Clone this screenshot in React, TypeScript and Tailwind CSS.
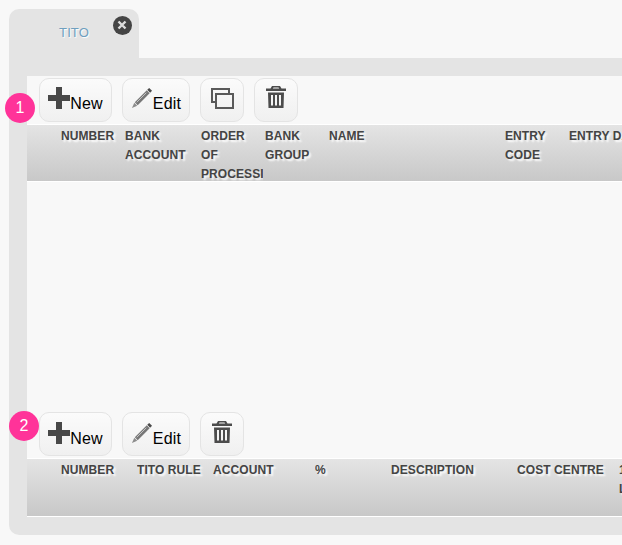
import React from 'react';

const firstColumns = [
  { label: 'NUMBER', width: 'w-[64px]' },
  { label: 'BANK ACCOUNT', width: 'w-[76px]' },
  { label: 'ORDER OF PROCESSING', width: 'w-[64px]' },
  { label: 'BANK GROUP', width: 'w-[64px]' },
  { label: 'NAME', width: 'w-[176px]' },
  { label: 'ENTRY CODE', width: 'w-[64px]' },
  { label: 'ENTRY DATE', width: 'w-[90px]' },
];

const secondColumns = [
  { label: 'NUMBER', width: 'w-[76px]' },
  { label: 'TITO RULE', width: 'w-[76px]' },
  { label: 'ACCOUNT', width: 'w-[102px]' },
  { label: '%', width: 'w-[76px]' },
  { label: 'DESCRIPTION', width: 'w-[126px]' },
  { label: 'COST CENTRE', width: 'w-[102px]' },
  { label: '1ST LEVEL', width: 'w-[64px]' },
];

function PlusIcon() {
  return (
    <svg width="22" height="22" viewBox="0 0 22 22" className="blur-[0.5px]">
      <path d="M8 0h6v8h8v6h-8v8H8v-8H0V8h8z" fill="#484848" />
    </svg>
  );
}

function PencilIcon() {
  return (
    <svg width="22" height="22" viewBox="0 0 23 22" className="blur-[0.4px]">
      <path d="M19 .500l3 3-2 2-3-3z" fill="#4a4a4a" />
      <path d="M16.500 3l3 3L7 18.500l-3-3z" fill="#777777" />
      <path d="M16 5.500L6 15.500" stroke="#c8c8c8" strokeWidth="1" />
      <path d="M3.500 16l3 3L1 21.500z" fill="#8c8c8c" />
    </svg>
  );
}

function CopyIcon() {
  return (
    <svg width="23" height="21" viewBox="0 0 23 21" className="blur-[0.4px] -mt-[3px]" fill="none" stroke="#5a5a5a" strokeWidth="2">
      <path d="M4 14H1V1h17v5" />
      <rect x="5" y="6" width="17" height="14" />
    </svg>
  );
}

function TrashIcon() {
  return (
    <svg width="20" height="22" viewBox="0 0 20 22" className="blur-[0.5px] -mt-[6px]" fill="#4c4c4c">
      <path d="M6 0h8l1.500 2.500H20V5H0V2.500h4.500zM7.500 1.600l-.7 1h6.400l-.7-1z" />
      <path d="M2 6.500h16l-.5 15.500h-15zM5 9v10.500h2V9zm4 0v10.500h2V9zm4 0v10.500h2V9z" fillRule="evenodd" />
    </svg>
  );
}

function ToolButton({ children, width, low }: { children: React.ReactNode; width: string; low?: boolean }) {
  return (
    <button className={`${width} ${low ? 'pt-[2px]' : ''} h-[44px] flex items-center justify-center rounded-[10px] border border-[#e4e4e4] bg-gradient-to-b from-[#fbfbfb] to-[#f0f0f0] text-[16px] text-black`}>
      {children}
    </button>
  );
}

function NewButton({ low }: { low?: boolean }) {
  return (
    <ToolButton width="w-[73px]" low={low}>
      <span className="flex items-end -mt-[4px] leading-[18px]">
        <PlusIcon />
        <span className="-mb-[4px] tracking-[0.2px]">New</span>
      </span>
    </ToolButton>
  );
}

function EditButton({ low }: { low?: boolean }) {
  return (
    <ToolButton width="w-[68px]" low={low}>
      <span className="flex items-end -mt-[4px] leading-[18px]">
        <PencilIcon />
        <span className="-mb-[4px] tracking-[0.2px]">Edit</span>
      </span>
    </ToolButton>
  );
}

function HeaderRow({ columns, height }: { columns: { label: string; width: string }[]; height: string }) {
  return (
    <div className={`${height} flex pl-[34px] pt-[1.5px] w-[700px] overflow-hidden border-y border-white box-content bg-gradient-to-b from-[#e4e4e4] to-[#c8c8c8] bg-clip-padding`}>
      {columns.map((col) => (
        <div key={col.label} className={`${col.width} shrink-0 pr-[2px]`}>
          <div className="w-full overflow-hidden text-[12px] font-bold leading-[19px] tracking-[0.08px] text-[#444444] [text-shadow:2px_2px_2px_#ffffff]">
            {col.label}
          </div>
        </div>
      ))}
    </div>
  );
}

function Badge({ value, position }: { value: number; position: string }) {
  return (
    <div className={`absolute ${position} w-[30px] h-[30px] rounded-full bg-[#ff3399] flex items-center justify-center text-[16px] text-white`}>
      {value}
    </div>
  );
}

export default function App() {
  return (
    <div className="relative w-[622px] h-[545px] overflow-hidden bg-[#f8f8f8] pt-[9px] pl-[9px] font-['Liberation_Sans',Arial,sans-serif]">
      <div className="relative w-[130px] h-[49px] rounded-t-[10px] bg-[#e4e4e4] flex justify-center pt-[16px] px-[30px]">
        <span className="text-[13px] leading-[16px] tracking-[0.1px] text-[#6f9fbf] [text-shadow:1px_1px_1px_#ffffff]">TITO</span>
        <div className="absolute top-[6.500px] left-[103.500px] w-[19px] h-[19px] rounded-full bg-[#444444] flex items-center justify-center">
          <svg width="10" height="10" viewBox="0 0 10 10" stroke="#dddddd" strokeWidth="2.4" className="blur-[0.3px]">
            <path d="M1.500 1.500l7 7M8.500 1.500l-7 7" />
          </svg>
        </div>
      </div>

      <div className="w-[700px] h-[477px] rounded-b-[10px] bg-[#e4e4e4] pt-[18px] pl-[18px]">
        <div className="w-[682px] h-[441px] bg-[#f8f8f8]">
          <div className="flex gap-[10px] pl-[12px] pt-[2px]">
            <NewButton />
            <EditButton />
            <ToolButton width="w-[44px]"><CopyIcon /></ToolButton>
            <ToolButton width="w-[44px]"><TrashIcon /></ToolButton>
          </div>
          <div className="mt-[2px]">
            <HeaderRow columns={firstColumns} height="h-[54.500px]" />
          </div>
          <div className="flex gap-[10px] pl-[12px] mt-[230px]">
            <NewButton low />
            <EditButton low />
            <ToolButton width="w-[44px]" low><TrashIcon /></ToolButton>
          </div>
          <div className="mt-[2px]">
            <HeaderRow columns={secondColumns} height="h-[55.500px]" />
          </div>
        </div>
      </div>

      <Badge value={1} position="top-[93px] left-[5px]" />
      <Badge value={2} position="top-[411px] left-[9px]" />
    </div>
  );
}
